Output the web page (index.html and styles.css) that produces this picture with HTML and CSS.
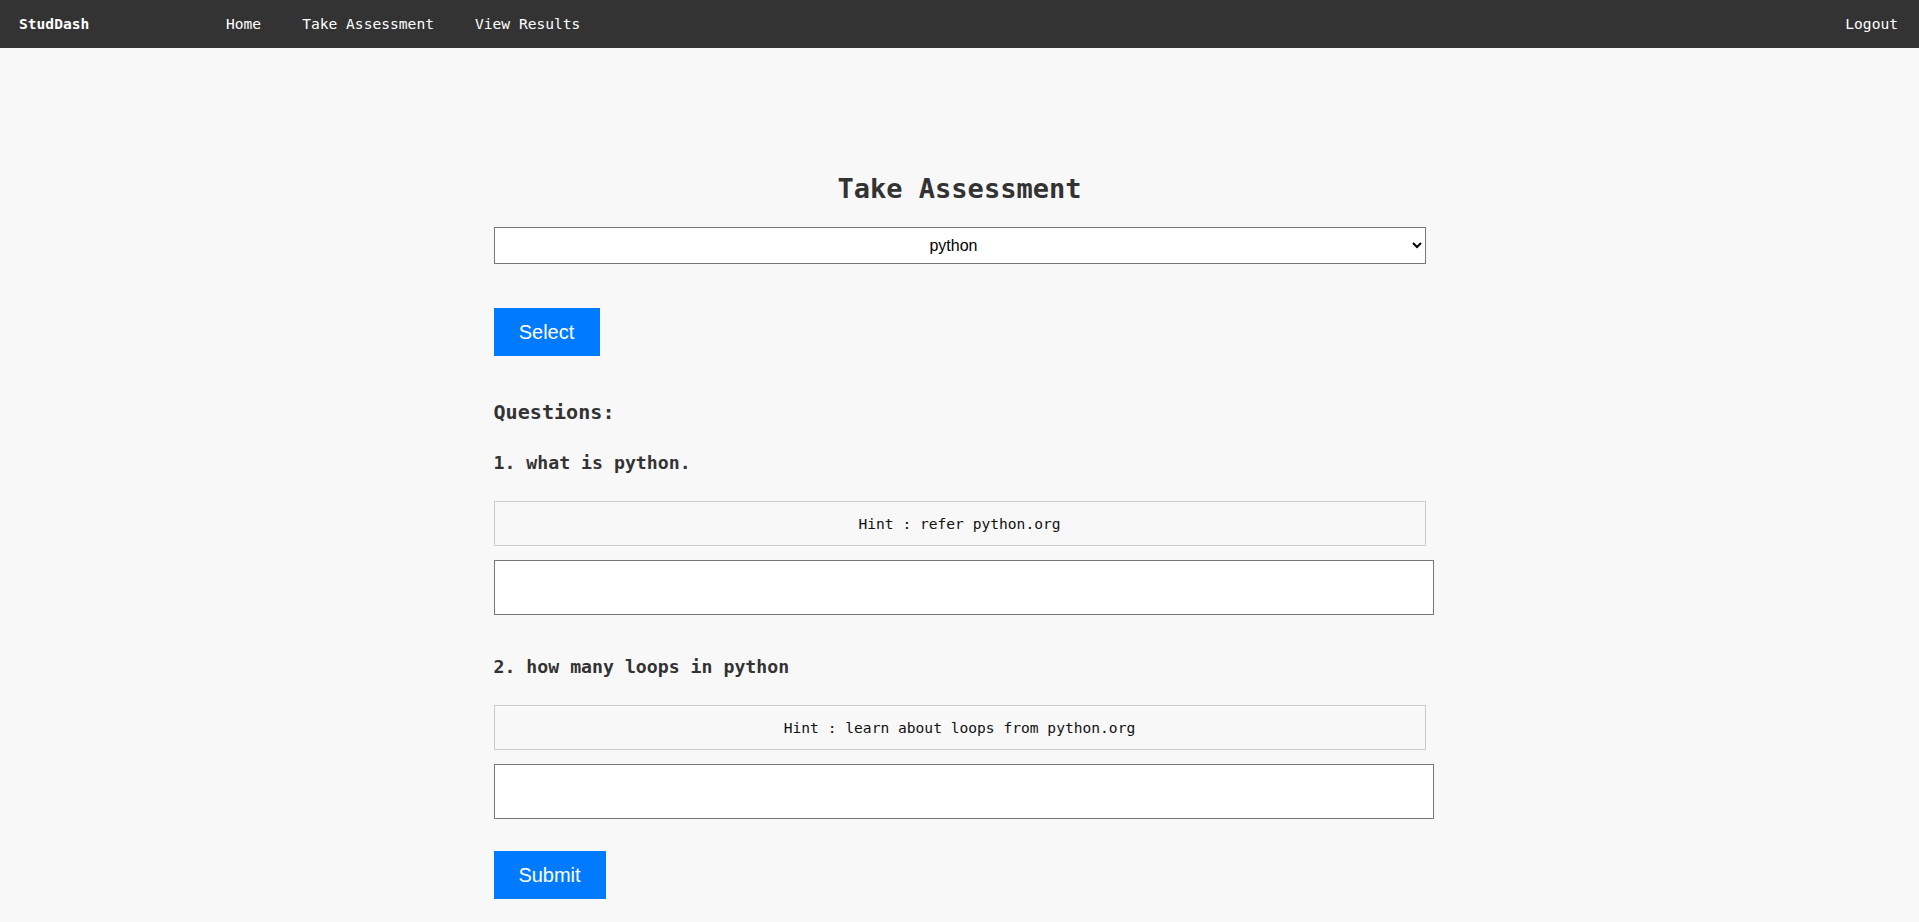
FILE: index.html
```html
<!DOCTYPE html>
<html lang="en">
<head>
<meta charset="utf-8">
<title>StudDash - Take Assessment</title>
<link rel="stylesheet" href="styles.css">
</head>
<body>
<nav class="topnav">
  <a class="brand" href="#">StudDash</a>
  <div class="links">
    <a href="#">Home</a>
    <a href="#">Take Assessment</a>
    <a href="#">View Results</a>
  </div>
  <a class="logout" href="#">Logout</a>
</nav>
<main class="container">
  <h2 class="title">Take Assessment</h2>
  <form class="pick">
    <select class="subject">
      <option>python</option>
    </select>
    <button type="button" class="btn btn-select">Select</button>
  </form>
  <form class="quiz">
    <h3 class="q-head">Questions:</h3>
    <div class="question">
      <p class="q-text">1. what is python.</p>
      <div class="hint">Hint : refer python.org</div>
      <textarea class="answer"></textarea>
    </div>
    <div class="question">
      <p class="q-text">2. how many loops in python</p>
      <div class="hint">Hint : learn about loops from python.org</div>
      <textarea class="answer"></textarea>
    </div>
    <button type="button" class="btn btn-submit">Submit</button>
  </form>
</main>
</body>
</html>
```
FILE: styles.css
```css
* { box-sizing: border-box; }
html, body { margin: 0; padding: 0; }
body {
  background: #f8f8f8;
  font-family: "DejaVu Sans Mono", "Liberation Mono", monospace;
  color: #333;
}
.topnav {
  height: 48px;
  background: #333;
  display: flex;
  align-items: center;
  padding: 0 21px 1px 19px;
  font-size: 14.6px;
}
.topnav a { color: #fff; text-decoration: none; }
.brand { font-weight: bold; width: 70px; }
.links { display: flex; gap: 41px; margin-left: 137px; }
.logout { margin-left: auto; }

.container {
  width: 932px;
  margin: 123px auto 0;
}
.title {
  margin: 0;
  font-size: 27px;
  line-height: 36px;
  text-align: center;
  font-weight: bold;
  color: #333;
}
.pick { margin: 20px 0 0; display: flex; flex-direction: column; align-items: flex-start; }
.subject {
  width: 100%;
  height: 37px;
  font-family: "Liberation Sans", Arial, sans-serif;
  font-size: 16px;
  color: #000;
  background: #fff;
  border: 1px solid #767676;
  border-radius: 0;
  text-align: center;
  text-align-last: center;
}
.btn {
  background: #007bff;
  color: #fff;
  border: 0;
  border-radius: 0;
  font-family: "Liberation Sans", Arial, sans-serif;
  font-size: 20px;
  line-height: 23px;
  height: 48px;
  padding: 0 24px;
}
.btn-select { margin-top: 44px; width: 106px; }
.quiz { margin-top: 42px; display: flex; flex-direction: column; align-items: flex-start; }
.q-head {
  margin: 0;
  font-size: 20.1px;
  line-height: 28px;
  font-weight: bold;
  color: #333;
}
.question { width: 100%; }
.q-text {
  margin: 24px 0 0;
  font-size: 18.2px;
  line-height: 26px;
  font-weight: bold;
  color: #333;
}
.question + .question .q-text { margin-top: 39px; }
.hint {
  margin-top: 25px;
  height: 45px;
  border: 1px solid #cccccc;
  background: #f8f8f8;
  display: flex;
  align-items: center;
  justify-content: center;
  font-size: 14.6px;
  color: #111;
}
.answer {
  display: block;
  margin-top: 13.5px;
  width: calc(100% + 8px);
  height: 55.5px;
  border: 1px solid #767676;
  border-radius: 0;
  background: #fff;
  resize: none;
  font-family: inherit;
}
.btn-submit { margin-top: 32px; width: 112px; }
```
